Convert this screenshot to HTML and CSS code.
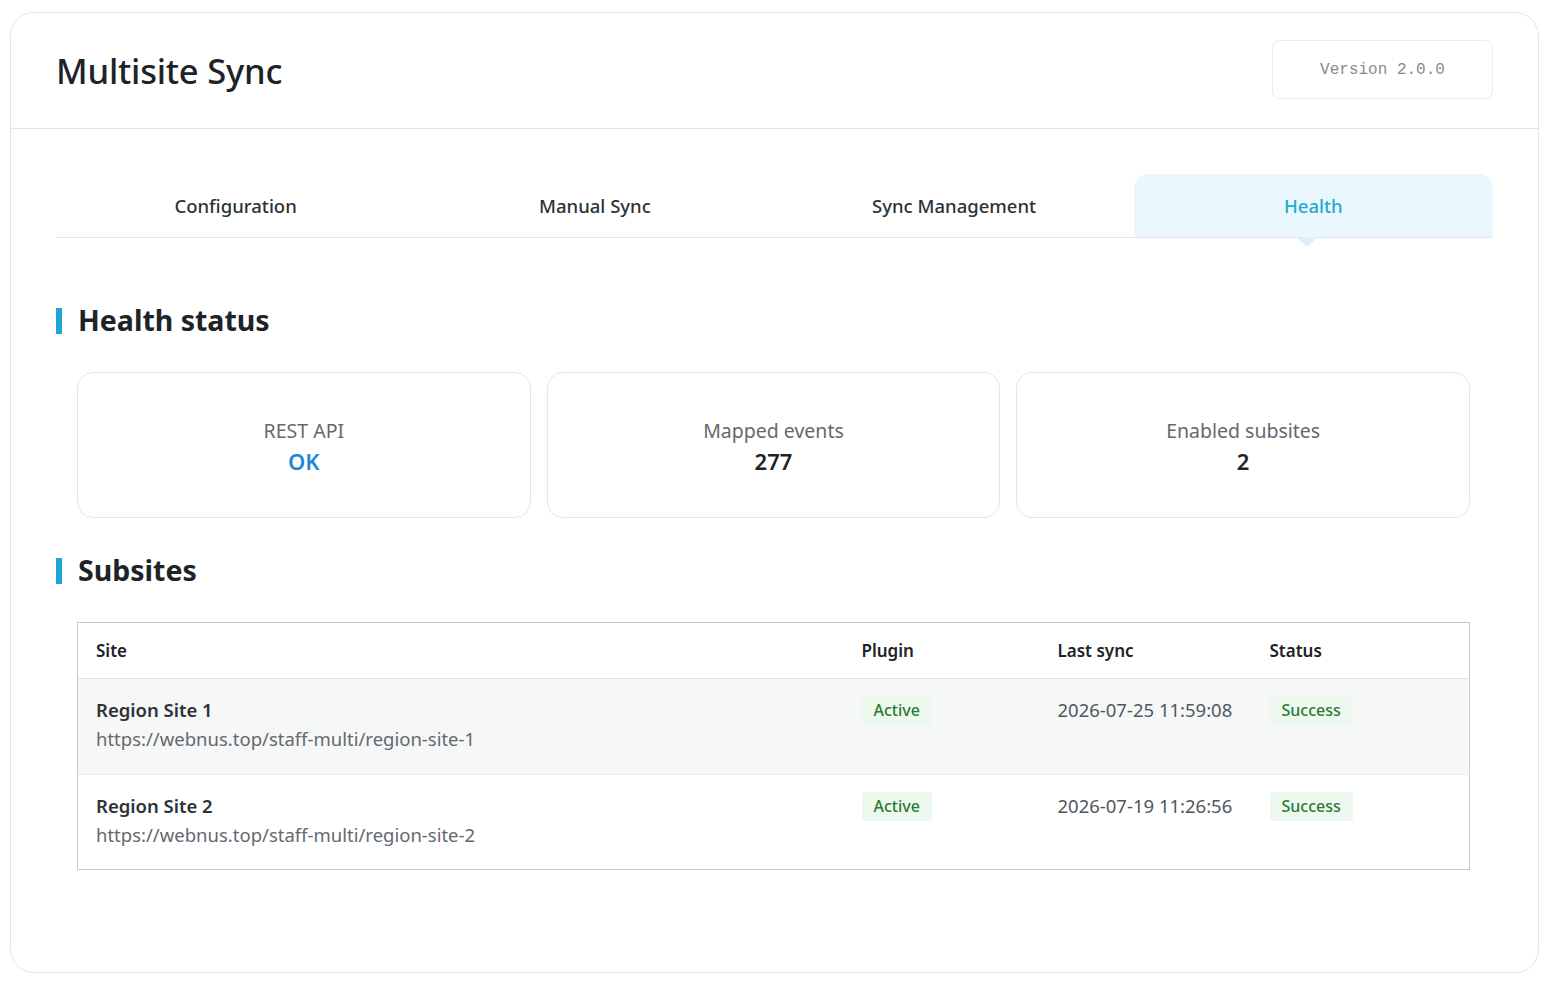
FILE: index.html
```html
<!DOCTYPE html>
<html>
<head>
<meta charset="utf-8">
<link rel="stylesheet" href="styles.css">
</head>
<body>
<div class="app">
  <header class="app-header">
    <h1 class="app-title">Multisite Sync</h1>
    <div class="version">Version 2.0.0</div>
  </header>
  <main class="app-body">
    <nav class="tabs">
      <div class="tab">Configuration</div>
      <div class="tab">Manual Sync</div>
      <div class="tab">Sync Management</div>
      <div class="tab active">Health</div>
    </nav>

    <h2 class="section-title">Health status</h2>
    <div class="cards">
      <div class="card"><div class="card-label">REST API</div><div class="card-value ok">OK</div></div>
      <div class="card"><div class="card-label">Mapped events</div><div class="card-value">277</div></div>
      <div class="card"><div class="card-label">Enabled subsites</div><div class="card-value">2</div></div>
    </div>

    <h2 class="section-title">Subsites</h2>
    <table class="table">
      <thead>
        <tr><th class="c-site">Site</th><th class="c-plugin">Plugin</th><th class="c-sync">Last sync</th><th class="c-status">Status</th></tr>
      </thead>
      <tbody>
        <tr class="alt">
          <td><div class="site-name">Region Site 1</div><div class="site-url">https://webnus.top/staff-multi/region-site-1</div></td>
          <td><span class="badge">Active</span></td>
          <td class="date">2026-07-25 11:59:08</td>
          <td><span class="badge">Success</span></td>
        </tr>
        <tr>
          <td><div class="site-name">Region Site 2</div><div class="site-url">https://webnus.top/staff-multi/region-site-2</div></td>
          <td><span class="badge">Active</span></td>
          <td class="date">2026-07-19 11:26:56</td>
          <td><span class="badge">Success</span></td>
        </tr>
      </tbody>
    </table>
  </main>
</div>
</body>
</html>
```

FILE: styles.css
```css
* { box-sizing: border-box; }
html, body { margin: 0; background: #fff; }
body {
  padding: 12px 10px 12px 10px;
  font-family: "Noto Sans", "Open Sans", sans-serif;
  color: #1d2327;
}
.app {
  border: 1px solid #e6e6e6;
  border-radius: 24px;
  height: 961px;
  background: #fff;
}
.app-header {
  height: 116px;
  border-bottom: 1px solid #e2e2e2;
  display: flex;
  align-items: flex-start;
  justify-content: space-between;
  padding: 27px 45px 0 45px;
}
.app-title {
  margin: 7px 0 0 0;
  font-size: 34.5px;
  font-weight: 500;
  color: #1d2327;
  letter-spacing: -0.2px;
}
.version {
  width: 221px;
  height: 59px;
  border: 1px solid #ebebeb;
  border-radius: 8px;
  display: flex;
  align-items: center;
  justify-content: center;
  font-family: "Liberation Mono", "DejaVu Sans Mono", monospace;
  font-size: 16px;
  color: #8a8a8a;
}
.app-body {
  padding: 45px 45px 0 45px;
}
.tabs {
  display: grid;
  grid-template-columns: repeat(4, 1fr);
  border-bottom: 1px solid #e6e6e6;
  height: 64px;
}
.tab {
  display: flex;
  align-items: center;
  justify-content: center;
  font-size: 18.5px;
  font-weight: 500;
  color: #2c3338;
  position: relative;
  border-radius: 14px 14px 0 0;
  padding-bottom: 1px;
}
.tab.active {
  background: #eaf8fd;
  color: #27a7d3;
}
.tab.active::after {
  content: "";
  position: absolute;
  left: 50%;
  bottom: -10px;
  width: 0; height: 0;
  margin-left: -17px;
  border-left: 11px solid transparent;
  border-right: 11px solid transparent;
  border-top: 10px solid #dcf1f8;
}
.section-title {
  margin: 63px 0 0 0;
  font-size: 28.5px;
  font-weight: 700;
  color: #1d2327;
  display: flex;
  align-items: center;
  line-height: 38px;
}
.section-title::before {
  content: "";
  width: 6px;
  height: 26px;
  background: #1ea5d5;
  margin-right: 16px;
  margin-top: 2px;
}
.cards {
  display: grid;
  grid-template-columns: repeat(3, 1fr);
  gap: 16px;
  margin: 33px 23px 0 21px;
}
.card {
  height: 146px;
  border: 1px solid #e6e6e6;
  border-radius: 16px;
  display: flex;
  flex-direction: column;
  align-items: center;
  justify-content: center;
  gap: 2px;
  padding-top: 2px;
}
.card-label {
  font-size: 19.5px;
  color: #646970;
  font-weight: 400;
}
.card-value {
  font-size: 22px;
  font-weight: 600;
  color: #1d2327;
}
.card-value.ok { color: #1e88d8; }
.cards + .section-title { margin-top: 33px; }
.table {
  margin: 33px 23px 0 21px;
  width: calc(100% - 44px);
  border-collapse: collapse;
  border: 1px solid #c9c9c9;
}
.table th {
  text-align: left;
  font-size: 17px;
  font-weight: 600;
  color: #1d2327;
  height: 56px;
  padding: 0 18px;
  border-bottom: 1px solid #e3e3e3;
}
.table th.c-site { width: 766px; }
.table th.c-plugin { width: 196px; }
.table th.c-sync { width: 212px; }
.table td {
  vertical-align: top;
  padding: 17px 18px 0 18px;
  height: 95px;
  font-size: 18.5px;
}
.table tr.alt td { background: #f6f7f7; border-bottom: 1px solid #ececec; height: 96px; }
.site-name { font-weight: 600; color: #2c3338; line-height: 28px; }
.site-url { color: #646970; line-height: 30px; }
.date { color: #50575e; line-height: 28px; white-space: nowrap; }
.badge {
  display: inline-block;
  background: #edf8ee;
  color: #2a7a34;
  font-size: 16px;
  font-weight: 500;
  padding: 0 12px;
  height: 29px;
  line-height: 29px;
  border-radius: 3px;
}
```
